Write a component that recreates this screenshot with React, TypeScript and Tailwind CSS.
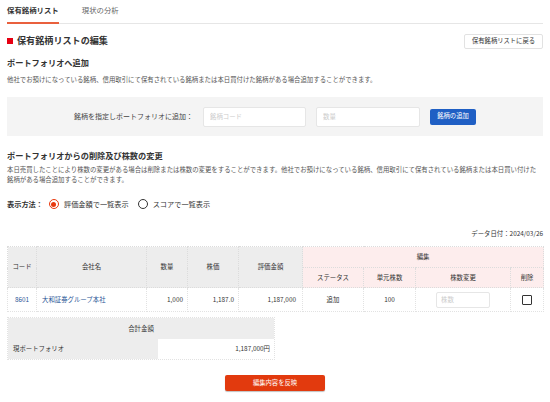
import React from "react";

const cols = [29, 110, 41, 51, 64, 61, 52, 95, 33];

const th = "border border-dotted border-[#dcdcdc] font-normal text-[6.4px] text-[#333]";
const td = "border border-dotted border-[#e2e2e2] text-[6.4px] h-[24px]";

const App = () => {
  return (
    <div
      className="w-[550px] h-[402px] bg-white px-[7px] text-[#333]"
      style={{ fontFamily: '"Noto Sans CJK JP", "Noto Sans", sans-serif' }}
    >
      {/* tabs */}
      <div className="flex h-[24px] border-b border-[#e6e6e6]">
        <div className="-mb-px border-b-2 border-[#e9603d] text-[7.4px] font-bold leading-[20px]">保有銘柄リスト</div>
        <div className="ml-[23px] text-[7.4px] leading-[20px] text-[#666]">現状の分析</div>
      </div>

      {/* title */}
      <div className="mt-[9px] flex h-[16px] items-center justify-between">
        <div className="flex items-center">
          <span className="mr-[4px] h-[6px] w-[6px] bg-[#e60012]" />
          <h1 className="text-[9.1px] font-bold leading-none">保有銘柄リストの編集</h1>
        </div>
        <button className="h-[15px] w-[79px] rounded-[2px] border border-[#e2e2e2] bg-white text-[6.3px] leading-none text-[#333]">
          保有銘柄リストに戻る
        </button>
      </div>

      <h2 className="mt-[8px] text-[8.2px] font-bold leading-[10px]">ポートフォリオへ追加</h2>
      <p className="mt-[8px] text-[6.4px] leading-[10px] text-[#555]">
        他社でお預けになっている銘柄、信用取引にて保有されている銘柄または本日買付けた銘柄がある場合追加することができます。
      </p>

      {/* add box */}
      <div className="mt-[12px] flex h-[39px] items-center justify-center bg-[#f4f4f4]">
        <span className="mr-[10px] text-[7px] text-[#444]">銘柄を指定しポートフォリオに追加：</span>
        <input
          placeholder="銘柄コード"
          className="mr-[10px] h-[20px] w-[103px] rounded-[2px] border border-[#e6e6e6] bg-white px-[6px] text-[6.4px] placeholder:text-[#ccc]"
        />
        <input
          placeholder="数量"
          className="mr-[10px] h-[20px] w-[104px] rounded-[2px] border border-[#e6e6e6] bg-white px-[6px] text-[6.4px] placeholder:text-[#ccc]"
        />
        <button className="h-[16px] w-[46px] rounded-[2px] bg-[#1f5fc4] text-[6.3px] leading-none text-white">銘柄の追加</button>
      </div>

      <h2 className="mt-[14px] text-[8.2px] font-bold leading-[10px]">ポートフォリオからの削除及び株数の変更</h2>
      <p className="mt-[5px] whitespace-nowrap text-[6.4px] leading-[9.5px] text-[#555]">
        本日売買したことにより株数の変更がある場合は削除または株数の変更をすることができます。他社でお預けになっている銘柄、信用取引にて保有されている銘柄または本日買い付けた
        <br />
        銘柄がある場合追加することができます。
      </p>

      {/* display mode */}
      <div className="mt-[14px] flex h-[12px] items-center text-[7.2px]">
        <span className="font-bold">表示方法：</span>
        <span className="ml-[6px] flex h-[10px] w-[10px] items-center justify-center rounded-full border border-[#e8380d]">
          <span className="h-[5px] w-[5px] rounded-full bg-[#e8380d]" />
        </span>
        <span className="ml-[5px]">評価金額で一覧表示</span>
        <span className="ml-[9px] h-[10px] w-[10px] rounded-full border border-[#333]" />
        <span className="ml-[5px]">スコアで一覧表示</span>
      </div>

      <div className="mt-[19px] text-right text-[6.4px] leading-[10px]">データ日付：2024/03/26</div>

      {/* holdings table */}
      <table className="mt-[7px] w-[536px] table-fixed border-collapse">
        <colgroup>
          {cols.map((w, i) => (
            <col key={i} style={{ width: w }} />
          ))}
        </colgroup>
        <thead>
          <tr className="h-[21px]">
            <th rowSpan={2} className={`${th} bg-[#ededed]`}>コード</th>
            <th rowSpan={2} className={`${th} bg-[#ededed]`}>会社名</th>
            <th rowSpan={2} className={`${th} bg-[#ededed]`}>数量</th>
            <th rowSpan={2} className={`${th} bg-[#ededed]`}>株価</th>
            <th rowSpan={2} className={`${th} bg-[#ededed]`}>評価金額</th>
            <th colSpan={4} className={`${th} bg-[#fdeded]`}>編集</th>
          </tr>
          <tr className="h-[20px]">
            <th className={`${th} bg-[#fdeded]`}>ステータス</th>
            <th className={`${th} bg-[#fdeded]`}>単元株数</th>
            <th className={`${th} bg-[#fdeded]`}>株数変更</th>
            <th className={`${th} bg-[#fdeded]`}>削除</th>
          </tr>
        </thead>
        <tbody>
          <tr>
            <td className={`${td} text-center text-[#2a5596]`}>8601</td>
            <td className={`${td} pl-[5px] text-[#2a5596]`}>大和証券グループ本社</td>
            <td className={`${td} pr-[4px] text-right`}>1,000</td>
            <td className={`${td} pr-[4px] text-right`}>1,187.0</td>
            <td className={`${td} pr-[6px] text-right`}>1,187,000</td>
            <td className={`${td} text-center`}>追加</td>
            <td className={`${td} text-center`}>100</td>
            <td className={`${td} pl-[20px]`}>
              <input
                placeholder="株数"
                className="h-[16px] w-[54px] rounded-[2px] border border-[#e6e6e6] px-[4px] text-[6.4px] placeholder:text-[#ccc]"
              />
            </td>
            <td className={`${td}`}>
              <div className="mx-auto h-[10px] w-[10px] rounded-[1px] border border-[#333]" />
            </td>
          </tr>
        </tbody>
      </table>

      {/* total */}
      <div className="mt-[5px] w-[268px] border border-dotted border-[#e2e2e2] text-[6.4px]">
        <div className="flex h-[21px] items-center justify-center bg-[#ededed]">合計金額</div>
        <div className="flex h-[20px]">
          <div className="flex w-[150px] items-center bg-[#ededed] pl-[5px]">現ポートフォリオ</div>
          <div className="flex flex-1 items-center justify-end pr-[4px]">1,187,000円</div>
        </div>
      </div>

      <div className="mt-[15px] flex justify-center">
        <button className="h-[16px] w-[100px] rounded-[2px] bg-[#e23a0e] text-[6.3px] leading-none text-white shadow-[0_1px_1px_rgba(0,0,0,0.25)]">
          編集内容を反映
        </button>
      </div>
    </div>
  );
};

export default App;
